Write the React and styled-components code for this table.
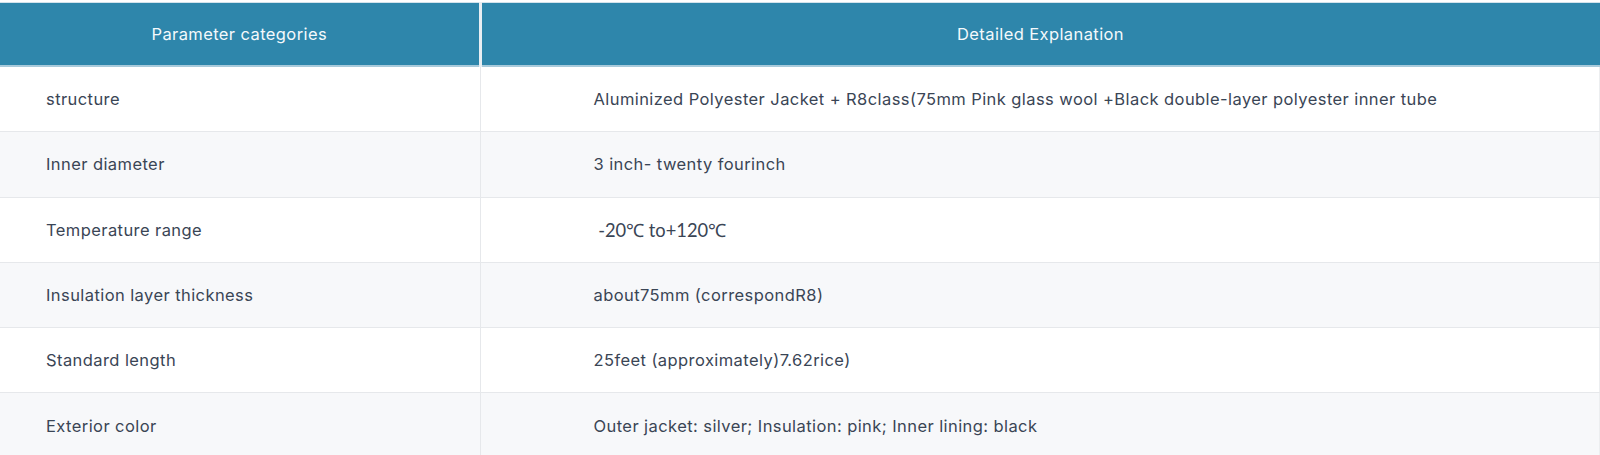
import React from "react";
import styled, { createGlobalStyle } from "styled-components";

const GlobalStyle = createGlobalStyle`
  html, body {
    margin: 0;
    padding: 0;
    background: #ffffff;
  }
  body {
    font-family: "Inter", "Open Sans", Arial, sans-serif;
    overflow: hidden;
  }
`;

const rows = [
  { name: "structure", value: "Aluminized Polyester Jacket + R8class(75mm Pink glass wool +Black double-layer polyester inner tube" },
  { name: "Inner diameter", value: "3 inch- twenty fourinch" },
  { name: "Temperature range", value: "\u00a0-20℃ to+120℃", alt: true },
  { name: "Insulation layer thickness", value: "about75mm (correspondR8)" },
  { name: "Standard length", value: "25feet (approximately)7.62rice)" },
  { name: "Exterior color", value: "Outer jacket: silver; Insulation: pink; Inner lining: black" },
];

const Wrapper = styled.div`
  width: 1600px;
  padding-top: 2px;
`;

const Table = styled.table`
  width: 100%;
  border-collapse: collapse;
  table-layout: fixed;
  border-top: 1px solid #d3e3ec;
`;

const HeadCell = styled.th`
  height: 62px;
  padding: 0;
  background: #2e86ab;
  color: #f4f9fc;
  font-weight: 400;
  font-size: 16.5px;
  letter-spacing: 0.4px;
  text-align: center;
  border-bottom: 2px solid #a8cadb;
  border-right: ${(p) => (p.$divider ? "3px solid #e9eef2" : "none")};
`;

const Row = styled.tr`
  background: ${(p) => (p.$striped ? "#f7f8fa" : "#ffffff")};
`;

const Cell = styled.td`
  height: 64.3px;
  padding: 0 0 0 ${(p) => (p.$value ? "113px" : "46px")};
  color: #3a4555;
  font-size: ${(p) => (p.$alt ? "18.3px" : "16.5px")};
  letter-spacing: ${(p) => (p.$alt ? "0" : "0.42px")};
  font-family: ${(p) => (p.$alt ? '"Lato", sans-serif' : "inherit")};
  border-bottom: 1px solid #e6e8eb;
  border-right: ${(p) => (p.$value ? "1px solid #eceef0" : "1px solid #e6e8eb")};
  white-space: nowrap;
`;

export default function App() {
  return (
    <>
      <GlobalStyle />
      <Wrapper>
        <Table>
          <colgroup>
            <col style={{ width: "480px" }} />
            <col />
          </colgroup>
          <thead>
            <tr>
              <HeadCell $divider>Parameter categories</HeadCell>
              <HeadCell>Detailed Explanation</HeadCell>
            </tr>
          </thead>
          <tbody>
            {rows.map((r, i) => (
              <Row key={r.name} $striped={i % 2 === 1}>
                <Cell>{r.name}</Cell>
                <Cell $value $alt={r.alt}>{r.value}</Cell>
              </Row>
            ))}
          </tbody>
        </Table>
      </Wrapper>
    </>
  );
}
